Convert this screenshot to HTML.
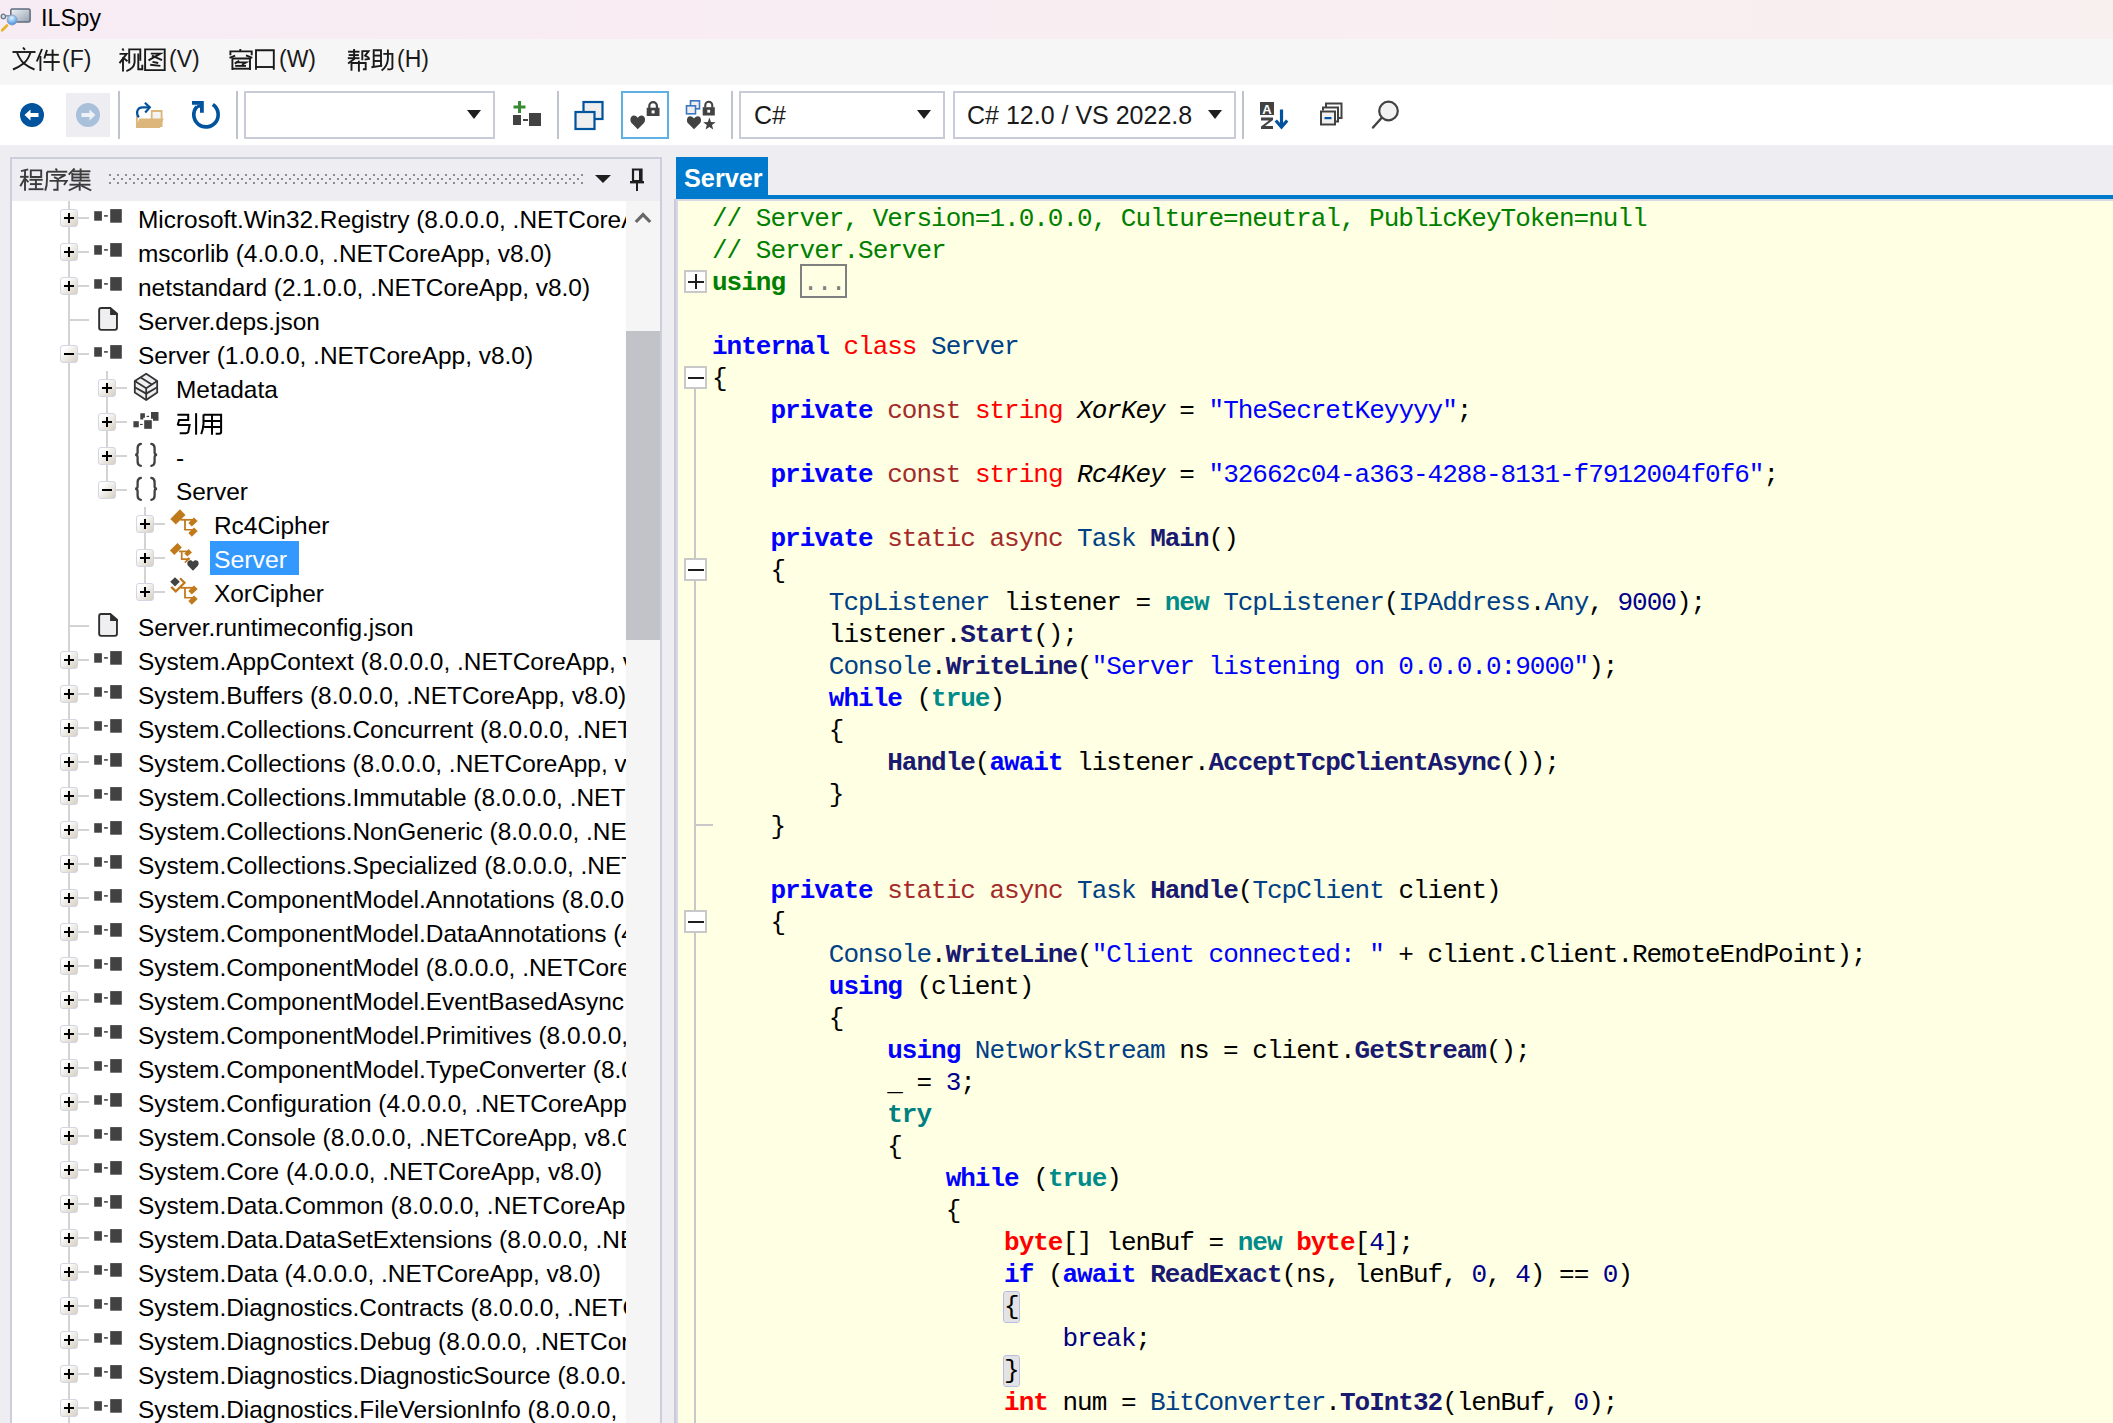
<!DOCTYPE html>
<html><head><meta charset="utf-8">
<style>
*{box-sizing:border-box}
html,body{margin:0;padding:0}
body{width:2113px;height:1423px;overflow:hidden;position:relative;background:#EEEEF2;font-family:"Liberation Sans",sans-serif;color:#1E1E1E}
.abs{position:absolute}
#title{position:absolute;left:0;top:0;width:2113px;height:39px;background:linear-gradient(90deg,#F8ECF4 0%,#F9EEF1 70%,#F8EFEF 100%)}
#title .t{position:absolute;left:41px;top:5px;font-size:23.5px;color:#000}
#menu{position:absolute;left:0;top:39px;width:2113px;height:46px;background:#F6F6F6}
#menu .m{position:absolute;top:7px;font-size:23px;color:#1A1A1A;white-space:pre}
#tool{position:absolute;left:0;top:85px;width:2113px;height:60px;background:#FFFFFF}
.sep{position:absolute;top:91px;width:2px;height:48px;background:#BFC3CE}
.combo{position:absolute;top:91px;height:48px;border:2px solid #C9CBD9;background:#fff}
.combo .v{position:absolute;left:13px;top:8px;font-size:25px;color:#1A1A1A;white-space:pre}
.tri{position:absolute;width:0;height:0;border-left:7px solid transparent;border-right:7px solid transparent;border-top:9px solid #1E1E1E}
#lp{position:absolute;left:10px;top:157px;width:652px;height:1300px;border:2px solid #CCCEDB;background:#EEEEF2}
#lptitle{position:absolute;left:20px;top:165px;font-size:24px;color:#3C3C3C}
#tree{position:absolute;left:12px;top:201px;width:614px;height:1222px;background:#fff;overflow:hidden}
#treein{position:absolute;left:-12px;top:-201px;width:2000px;height:3000px}
#sb{position:absolute;left:626px;top:201px;width:34px;height:1222px;background:#F5F5F5}
#thumb{position:absolute;left:626px;top:331px;width:34px;height:309px;background:#C2C3C9}
.exp{position:absolute;width:18px;height:18px;border:1.5px solid #D3D5E2;border-radius:3px;background:linear-gradient(135deg,#FFFFFF 20%,#D6CFC1 100%)}
.exp .ph{position:absolute;left:2.5px;top:6.5px;width:10px;height:2px;background:#000}
.exp .pv{position:absolute;left:6.5px;top:2.5px;width:2px;height:10px;background:#000}
.tt{position:absolute;height:34px;line-height:38px;font-size:24.8px;white-space:pre;color:#000;padding:0 1px;transform:scaleX(0.985);transform-origin:0 0}
.tt.sel{background:#3399FF;color:#fff;left:210px!important;width:89px;padding-left:4px;transform:none}
#tab{position:absolute;left:676px;top:157px;width:92px;height:42px;background:#007ACC}
#tab .t{position:absolute;left:8px;top:6px;font-size:26.2px;font-weight:bold;color:#fff;transform:scaleX(0.965);transform-origin:0 0}
#tabline{position:absolute;left:676px;top:195px;width:1437px;height:4px;background:#007ACC}
#edb{position:absolute;left:674px;top:199px;width:1439px;height:1224px;background:#D7D8E2}
#edbl{position:absolute;left:674px;top:199px;width:2px;height:1224px;background:#C9CBD8}
#ed{position:absolute;left:678px;top:201px;width:1435px;height:1222px;background:#FFFFE3;overflow:hidden}
#code{position:absolute;left:34px;top:2px;font-family:"Liberation Mono",monospace;font-size:26px;letter-spacing:-1px;color:#000}
.ln{white-space:pre}
.ln{height:32px;line-height:32px}
.coll{display:inline-block;box-sizing:border-box;width:47px;overflow:hidden;border:2px solid #808080;height:34px;line-height:34px;vertical-align:top;margin-top:-3px;color:#808080;padding:0;letter-spacing:-1.5px;text-indent:1px}
.bm{background:#E3E3E3;outline:1.5px solid #B7BBE6;border-radius:2px}
.fb{position:absolute;width:23px;height:23px;border:2px solid #C8C8C8;background:#fff}
.fb .h{position:absolute;left:1.5px;top:8.5px;width:16px;height:2px;background:#1E1E1E}
.fb .v{position:absolute;left:8.5px;top:2px;width:2px;height:15px;background:#1E1E1E}
</style></head><body>
<div id="title">
 <svg class="abs" style="left:0;top:0" width="36" height="36" viewBox="0 0 36 36">
  <defs><linearGradient id="scr" x1="0" y1="0" x2="1" y2="1"><stop offset="0" stop-color="#F2F5F8"/><stop offset="1" stop-color="#939FB0"/></linearGradient>
  <radialGradient id="lens" cx="0.45" cy="0.3" r="0.7"><stop offset="0" stop-color="#E2F6FD"/><stop offset="0.6" stop-color="#7EB8EE"/><stop offset="1" stop-color="#4A86D8"/></radialGradient></defs>
  <rect x="10.8" y="8.9" width="19.3" height="13.2" rx="1.6" fill="url(#scr)" stroke="#5D6B7C" stroke-width="1.5"/>
  <path d="M5.5 15.9 H10.5" stroke="#6A7889" stroke-width="1.3"/>
  <circle cx="3.4" cy="16.4" r="2.2" fill="#D5DCE3" stroke="#6E7A88" stroke-width="1.3"/>
  <circle cx="12.1" cy="20" r="5" fill="url(#lens)" stroke="#8C9BBE" stroke-width="0.8"/>
  <path d="M7 25.6 L2.2 30.2" stroke="#E5B42C" stroke-width="2.8" stroke-linecap="round"/>
 </svg>
 <div class="t">ILSpy</div>
</div>
<div id="menu">
 <div class="m" style="left:62px">(F)</div>
 <div class="m" style="left:169px">(V)</div>
 <div class="m" style="left:279px">(W)</div>
 <div class="m" style="left:397px">(H)</div>
</div>
<svg class="abs" style="left:0px;top:40px" width="470" height="40" viewBox="0 40 470 40"><g fill="none" stroke="#1A1A1A" stroke-width="1.9" stroke-linecap="butt" stroke-linejoin="miter"><path d="M23 47.5 L25 49.8"/><path d="M12.5 52 H35.5"/><path d="M17 52.5 Q20 60 24 63.5 Q29 67.5 34.5 69.5"/><path d="M30.5 52.5 Q28 60 23.5 63.5 Q19 67 13 69.5"/><path d="M42 49 L36.8 61.5"/><path d="M40.4 56 V71"/><path d="M47 50 L44.3 58.5"/><path d="M46 54.8 H58.8"/><path d="M43.5 62 H59.7"/><path d="M52.6 49.4 V71"/><path d="M122.4 48.5 L123.6 50.6"/><path d="M119.5 53.9 H126.6 L119.5 63.2"/><path d="M123 57.3 V71.5"/><path d="M124.1 58.5 L127.5 61.3"/><path d="M129.2 63.6 V49.4 H140.3 V60.7"/><path d="M134.6 53.4 V62.4 Q134 68.5 126.4 71.2"/><path d="M138.3 53.4 V69.3 H142.3 V64.7"/><path d="M145.1 49.4 H164.7 V70.1 H145.1 Z"/><path d="M150.8 53.6 H160.4 L148.5 60.4"/><path d="M151.9 55.6 L162.1 60.2"/><path d="M152.5 61.9 L158.2 63"/><path d="M150.2 64.7 L160.4 65.9"/><path d="M240.3 49 V51.2"/><path d="M230.4 55.3 V51.4 H251.7 V55.3"/><path d="M235.2 55.6 L229.5 57.8"/><path d="M246 55.3 L252.3 57.8"/><path d="M232.4 70.1 V58.5 H250 V70.1"/><path d="M232.4 68.7 H250"/><path d="M239.2 60.7 L234.7 63.6"/><path d="M235.8 62.4 H246 L242 64.7"/><path d="M235.2 65.9 H246"/><path d="M256 69.8 V50.2 H273.8 V69.8"/><path d="M256 67 H273.8"/><path d="M348.1 51.7 H359.5"/><path d="M348.7 55.1 H358.9"/><path d="M347.8 58.2 H359.5"/><path d="M354.1 49.1 V59 L348.1 63.6"/><path d="M362.3 60.2 V51.1 H368.6 L365.1 55.6 Q369.5 57.5 369 59 L364.6 59.6"/><path d="M351.5 70.8 V63 H365.7 V69.3 H362.9"/><path d="M358.9 60.7 V71.7"/><path d="M373.7 66.4 V50.2 H381 V66.4"/><path d="M373.7 55.6 H381"/><path d="M373.7 61 H381"/><path d="M371.4 67.2 L382.2 65.6"/><path d="M383.3 53.9 H392.4 V68.1 Q392.4 69.5 387.3 69.3"/><path d="M387.9 49.4 V59 Q387.5 66 381.6 70.6"/></g></svg>
<div id="tool"></div>
<!-- back -->
<svg class="abs" style="left:18px;top:101px" width="28" height="28" viewBox="0 0 28 28">
 <circle cx="14" cy="14" r="12" fill="#00539C"/>
 <path d="M6.5 14 L12.5 8.5 V12 H20.5 V16 H12.5 V19.5 Z" fill="#fff"/>
</svg>
<div class="abs" style="left:66px;top:93px;width:44px;height:44px;background:#EEEEF2"></div>
<svg class="abs" style="left:74px;top:101px" width="28" height="28" viewBox="0 0 28 28">
 <circle cx="14" cy="14" r="12" fill="#A9C0DA"/>
 <path d="M21.5 14 L15.5 8.5 V12 H7.5 V16 H15.5 V19.5 Z" fill="#EEF2F7"/>
</svg>
<div class="sep" style="left:118px"></div>
<!-- open -->
<svg class="abs" style="left:134px;top:100px" width="32" height="32" viewBox="0 0 32 32">
 <path d="M17.7 11 H27.6 V26 H17.7 Z" fill="#F3F3F3" stroke="#DCB67A" stroke-width="1.8"/>
 <path d="M2 15.3 V27.9 H26 L29.6 18.4 H5.3 L2 27" fill="#DCB67A"/>
 <path d="M2.9 15.3 V27" stroke="#DCB67A" stroke-width="1.8"/>
 <path d="M4.9 17.2 C1.5 13.5 3 7.4 8.5 7.4 H15.5" fill="none" stroke="#00539C" stroke-width="2.2"/>
 <path d="M10.9 2.7 L15.8 7.4 L11.2 12.6" fill="none" stroke="#00539C" stroke-width="2.2"/>
</svg>
<!-- refresh -->
<svg class="abs" style="left:190px;top:99px" width="34" height="34" viewBox="0 0 34 34">
 <path d="M22.8 5.6 A12.2 12.2 0 1 1 7.08 7.38" fill="none" stroke="#00539C" stroke-width="3.65"/>
 <path d="M2 2 H13.8 V13.85 H10 V5.84 H2 Z" fill="#00539C"/>
 <path d="M7.5 5.5 L10.5 5.5 L10.5 8.5 L6 9.5 Z" fill="#00539C"/>
</svg>
<div class="sep" style="left:236px"></div>
<div class="combo" style="left:244px;width:251px"><div class="tri" style="left:221px;top:17px"></div></div>
<!-- add assembly -->
<svg class="abs" style="left:510px;top:99px" width="34" height="30" viewBox="0 0 34 30">
 <rect x="8" y="2" width="3" height="12" fill="#388A34"/><rect x="3.5" y="6.5" width="12" height="3" fill="#388A34"/>
 <rect x="3" y="16" width="8" height="10" fill="#424242"/><rect x="13" y="20" width="5" height="2" fill="#424242"/><rect x="19" y="14" width="12" height="13" fill="#424242"/>
</svg>
<div class="sep" style="left:557px"></div>
<!-- windows -->
<svg class="abs" style="left:572px;top:99px" width="34" height="32" viewBox="0 0 34 32">
 <rect x="11.5" y="3" width="19" height="17" fill="#EFEFEF" stroke="#00539C" stroke-width="2.2"/>
 <rect x="3.5" y="13" width="19" height="17" fill="#EFEFEF" stroke="#00539C" stroke-width="2.2"/>
</svg>
<div class="abs" style="left:621px;top:91px;width:48px;height:48px;border:2px solid #5DB2E3"></div>
<svg class="abs" style="left:626px;top:99px" width="38" height="34" viewBox="0 0 38 34">
 <path d="M11.75 30.3 L5.8 24.3 C3.4 21.9 4.3 16.5 7.8 16.5 C9.8 16.5 11 17.7 11.75 19 C12.5 17.7 13.7 16.5 15.7 16.5 C19.2 16.5 20.1 21.9 17.7 24.3 Z" fill="#424242"/>
 <path d="M23.3 9 V6.9 A3.8 3.8 0 0 1 30.9 6.9 V9" fill="none" stroke="#424242" stroke-width="2.2"/>
 <rect x="20.7" y="8.7" width="12.8" height="8.3" fill="#424242"/><rect x="25.6" y="11.4" width="3" height="3" fill="#fff"/>
</svg>
<!-- heart lock star -->
<svg class="abs" style="left:684px;top:99px" width="36" height="34" viewBox="0 0 36 34">
 <rect x="6.5" y="1.8" width="9" height="8" fill="#EFEFEF" stroke="#3A76C2" stroke-width="1.6"/>
 <rect x="2.5" y="6.8" width="9" height="8" fill="#EFEFEF" stroke="#3A76C2" stroke-width="1.6"/>
 <path d="M10 30.3 L4.3 24.6 C1.9 22.2 2.8 17.2 6.1 17.2 C8 17.2 9.2 18.3 10 19.6 C10.8 18.3 12 17.2 13.9 17.2 C17.2 17.2 18.1 22.2 15.7 24.6 Z" fill="#424242"/>
 <path d="M21.25 8.5 V6.3 A3.5 3.5 0 0 1 28.25 6.3 V8.5" fill="none" stroke="#424242" stroke-width="2.1"/>
 <rect x="18.7" y="8.2" width="12.1" height="8.3" fill="#424242"/><rect x="23.3" y="10.8" width="2.8" height="2.8" fill="#fff"/>
 <path d="M25.4 18.4 L27 23 L31.6 23.2 L28 26 L29.2 30.6 L25.4 28 L21.6 30.6 L22.8 26 L19.2 23.2 L23.8 23 Z" fill="#424242"/>
</svg>
<div class="sep" style="left:731px"></div>
<div class="combo" style="left:739px;width:206px"><div class="v" style="left:13px">C#</div><div class="tri" style="left:176px;top:17px"></div></div>
<div class="combo" style="left:953px;width:283px"><div class="v" style="left:12px">C# 12.0 / VS 2022.8</div><div class="tri" style="left:253px;top:17px"></div></div>
<div class="sep" style="left:1242px"></div>
<!-- sort -->
<svg class="abs" style="left:1258px;top:100px" width="32" height="32" viewBox="0 0 32 32">
 <rect x="2" y="2" width="14" height="13" fill="#424242"/>
 <text x="9" y="13.5" font-family="Liberation Sans" font-weight="bold" font-size="13" fill="#fff" text-anchor="middle">A</text>
 <path d="M3 17.5 H15 V20 L7 26 H15 V29 H3 V26.5 L11 20.5 H3 Z" fill="#424242"/>
 <path d="M23.5 9.5 V26" stroke="#00539C" stroke-width="3.2"/><path d="M17.8 20.5 L23.5 27 L29.2 20.5" fill="none" stroke="#00539C" stroke-width="3.2"/>
</svg>
<!-- collapse -->
<svg class="abs" style="left:1318px;top:101px" width="28" height="28" viewBox="0 0 28 28">
 <path d="M8 6 V2.5 H23.5 V17 H20" fill="none" stroke="#424242" stroke-width="2"/>
 <path d="M5 9.5 V6.5 H20 V20.5 H17" fill="none" stroke="#424242" stroke-width="2"/>
 <rect x="3" y="10.5" width="14" height="13" fill="#F0F0F0" stroke="#424242" stroke-width="2"/>
 <rect x="6.5" y="16" width="7" height="2.2" fill="#00539C"/>
</svg>
<!-- search -->
<svg class="abs" style="left:1370px;top:100px" width="32" height="32" viewBox="0 0 32 32">
 <circle cx="18.5" cy="11" r="9.3" fill="#F2F2F2" stroke="#424242" stroke-width="2.2"/>
 <path d="M11.5 18 L3 27.5" stroke="#424242" stroke-width="2.4" stroke-linecap="round"/>
</svg>

<!-- left pane -->
<div id="lp"></div>
<svg class="abs" style="left:10px;top:160px" width="100" height="36" viewBox="10 160 100 36"><g fill="none" stroke="#3C3C3C" stroke-width="1.9" stroke-linecap="butt" stroke-linejoin="miter"><path d="M28.2 169.4 L21 171.1"/><path d="M20.1 176.8 H28.6"/><path d="M25 169.8 V190.7"/><path d="M25 177.9 L20.3 186.2"/><path d="M25.6 179.2 L28.4 182.1"/><path d="M30.8 170.4 H41.2 V177 H30.8 Z"/><path d="M29.5 179.8 H42.7"/><path d="M29.9 184.1 H41.8"/><path d="M28.6 189.2 H43.5"/><path d="M35.9 179.8 V189.2"/><path d="M55.5 168.5 L57.2 170.6"/><path d="M47 171.7 H67.2"/><path d="M47 171.7 V179.2 Q47 186 45.2 190.7"/><path d="M51.2 174.9 H65.5 L59.1 178.3"/><path d="M54 177.2 L59.1 179.4"/><path d="M49.5 180.9 H66.7 L64 185.1"/><path d="M57.6 179.6 V189.8 H53.3"/><path d="M74.6 168.5 L68.7 174.7"/><path d="M72.3 172.8 V181.3"/><path d="M73 171.3 H90.4"/><path d="M73 174.4 H89.4"/><path d="M73 177.5 H89.4"/><path d="M73 180.6 H90.4"/><path d="M80.6 168.5 V180.4"/><path d="M69.5 184.7 H90.4"/><path d="M79.7 182.1 V190.7"/><path d="M78.9 185.6 L68.7 190.5"/><path d="M81.4 185.6 L91.2 190.5"/></g></svg>
<svg class="abs" style="left:108px;top:172px" width="475" height="14">
 <defs><pattern id="grip" width="8" height="8" patternUnits="userSpaceOnUse"><rect x="1" y="2" width="2" height="2" fill="#8C8C8C"/><rect x="5" y="6" width="2" height="2" fill="#8C8C8C"/></pattern></defs>
 <rect x="0" y="0" width="475" height="13" fill="url(#grip)"/>
</svg>
<div class="tri" style="left:595px;top:175px;border-left-width:8px;border-right-width:8px;border-top-width:8px"></div>
<svg class="abs" style="left:628px;top:167px" width="18" height="26" viewBox="0 0 18 26">
 <path d="M5 2.5 H13.5 V14 H5 Z" fill="none" stroke="#1E1E1E" stroke-width="2.2"/>
 <rect x="11" y="2" width="3" height="12" fill="#1E1E1E"/>
 <rect x="2" y="14" width="14" height="2.4" fill="#1E1E1E"/>
 <rect x="8" y="15" width="2" height="9" fill="#1E1E1E"/>
</svg>
<div id="tree"><div id="treein">
<div style="position:absolute;left:68px;top:201px;width:2px;height:1222px;background:#D3D3D3"></div>
<div style="position:absolute;left:106px;top:371px;width:2px;height:119px;background:#D3D3D3"></div>
<div style="position:absolute;left:144px;top:507px;width:2px;height:85px;background:#D3D3D3"></div>
<div style="position:absolute;left:69px;top:217px;width:20px;height:2px;background:#D3D3D3"></div>
<div class="exp" style="left:60px;top:209px"><div class="ph"></div><div class="pv"></div></div>
<svg style="position:absolute;left:94px;top:201px" width="30" height="30" viewBox="0 0 30 30"><g fill="#424242"><rect x="0.2" y="10.2" width="7.7" height="9.5"/><rect x="10.1" y="14.1" width="3.7" height="1.6"/><rect x="16.2" y="8.1" width="11.6" height="13.6"/></g></svg>
<div class="tt" style="left:137px;top:201px">Microsoft.Win32.Registry (8.0.0.0, .NETCoreApp, v8.0)</div>
<div style="position:absolute;left:69px;top:251px;width:20px;height:2px;background:#D3D3D3"></div>
<div class="exp" style="left:60px;top:243px"><div class="ph"></div><div class="pv"></div></div>
<svg style="position:absolute;left:94px;top:235px" width="30" height="30" viewBox="0 0 30 30"><g fill="#424242"><rect x="0.2" y="10.2" width="7.7" height="9.5"/><rect x="10.1" y="14.1" width="3.7" height="1.6"/><rect x="16.2" y="8.1" width="11.6" height="13.6"/></g></svg>
<div class="tt" style="left:137px;top:235px">mscorlib (4.0.0.0, .NETCoreApp, v8.0)</div>
<div style="position:absolute;left:69px;top:285px;width:20px;height:2px;background:#D3D3D3"></div>
<div class="exp" style="left:60px;top:277px"><div class="ph"></div><div class="pv"></div></div>
<svg style="position:absolute;left:94px;top:269px" width="30" height="30" viewBox="0 0 30 30"><g fill="#424242"><rect x="0.2" y="10.2" width="7.7" height="9.5"/><rect x="10.1" y="14.1" width="3.7" height="1.6"/><rect x="16.2" y="8.1" width="11.6" height="13.6"/></g></svg>
<div class="tt" style="left:137px;top:269px">netstandard (2.1.0.0, .NETCoreApp, v8.0)</div>
<div style="position:absolute;left:69px;top:319px;width:20px;height:2px;background:#D3D3D3"></div>
<svg style="position:absolute;left:85px;top:303px" width="36" height="32" viewBox="0 0 36 32"><path d="M14.15 7 Q14.15 4.95 16.2 4.95 H25.3 L31.95 10.8 V24.8 Q31.95 26.85 29.9 26.85 H16.2 Q14.15 26.85 14.15 24.8 Z" fill="#EFEFF2" stroke="#2F2F2F" stroke-width="1.9"/><path d="M24.4 4 L32.9 10.9 V11.9 H25.1 V4 Z" fill="#2F2F2F"/></svg>
<div class="tt" style="left:137px;top:303px">Server.deps.json</div>
<div style="position:absolute;left:69px;top:353px;width:20px;height:2px;background:#D3D3D3"></div>
<div class="exp" style="left:60px;top:345px"><div class="ph"></div></div>
<svg style="position:absolute;left:94px;top:337px" width="30" height="30" viewBox="0 0 30 30"><g fill="#424242"><rect x="0.2" y="10.2" width="7.7" height="9.5"/><rect x="10.1" y="14.1" width="3.7" height="1.6"/><rect x="16.2" y="8.1" width="11.6" height="13.6"/></g></svg>
<div class="tt" style="left:137px;top:337px">Server (1.0.0.0, .NETCoreApp, v8.0)</div>
<div style="position:absolute;left:107px;top:387px;width:20px;height:2px;background:#D3D3D3"></div>
<div class="exp" style="left:98px;top:379px"><div class="ph"></div><div class="pv"></div></div>
<svg style="position:absolute;left:125px;top:370px" width="40" height="34" viewBox="0 0 40 34"><g fill="#EFEFF2" stroke="#333" stroke-width="1.8" stroke-linejoin="round"><path d="M21.2 3.7 L32.2 11.1 V22.6 L21.2 30 L9.8 22.6 V11.1 Z"/><path d="M9.8 11.1 L21.2 18.2 L32.2 11.1" fill="none"/><path d="M21.2 18.2 V30" fill="none"/><path d="M9.8 17.2 L21.2 23.6 L32.2 17.2" fill="none"/><path d="M15.7 7.6 L26.8 14.5" fill="none"/></g></svg>
<div class="tt" style="left:175px;top:371px">Metadata</div>
<div style="position:absolute;left:107px;top:421px;width:20px;height:2px;background:#D3D3D3"></div>
<div class="exp" style="left:98px;top:413px"><div class="ph"></div><div class="pv"></div></div>
<svg style="position:absolute;left:125px;top:405px" width="40" height="34" viewBox="0 0 40 34"><g fill="#424242"><path d="M15.3 8.3 H19.9 V12.8 H18.3 V14.4 H15.3 Z"/><rect x="21.6" y="10.8" width="2.5" height="1.2"/><path d="M26 7 H33.5 V15.7 H28 V13.8 H26 Z"/><rect x="8.4" y="16.2" width="5.4" height="6.1"/><rect x="15" y="18.9" width="2.7" height="1.1"/><rect x="19.2" y="15.2" width="7.6" height="8.6"/></g></svg>
<svg class="abs" style="left:170px;top:404px" width="60" height="36" viewBox="170 404 60 36"><g fill="none" stroke="#000" stroke-width="2.0" stroke-linecap="butt" stroke-linejoin="miter"><path d="M177.4 414.8 H188.2 V421"/><path d="M188.2 420 H179.1 L177.7 425.2"/><path d="M177.7 424.9 H189.6 L188.2 432.1 Q187.6 433.2 186 433.2 H179.7"/><path d="M196.1 413.2 V434.7"/><path d="M203.5 414.5 V423.9 Q203 430 201.2 434.1"/><path d="M203.5 414.8 H221.1 V432 Q221.1 433.8 219 433.8 H215.7"/><path d="M204.1 421 H221.1"/><path d="M204.1 427 H221.1"/><path d="M212 414.8 V434.7"/></g></svg>
<div style="position:absolute;left:107px;top:455px;width:20px;height:2px;background:#D3D3D3"></div>
<div class="exp" style="left:98px;top:447px"><div class="ph"></div><div class="pv"></div></div>
<svg style="position:absolute;left:125px;top:439px" width="40" height="34" viewBox="0 0 40 34"><g fill="none" stroke="#424242" stroke-width="2.3" stroke-linecap="round"><path d="M15.9 4.9 C13.2 5.3 12.6 6.6 12.6 9.2 V13.6 C12.6 15.1 11.6 15.9 10.1 15.9 C11.6 15.9 12.6 16.7 12.6 18.2 V22.6 C12.6 25.2 13.2 26.5 15.9 26.9"/><path d="M26.3 4.9 C29 5.3 29.6 6.6 29.6 9.2 V13.6 C29.6 15.1 30.6 15.9 32.1 15.9 C30.6 15.9 29.6 16.7 29.6 18.2 V22.6 C29.6 25.2 29 26.5 26.3 26.9"/></g></svg>
<div class="tt" style="left:175px;top:439px">-</div>
<div style="position:absolute;left:107px;top:489px;width:20px;height:2px;background:#D3D3D3"></div>
<div class="exp" style="left:98px;top:481px"><div class="ph"></div></div>
<svg style="position:absolute;left:125px;top:473px" width="40" height="34" viewBox="0 0 40 34"><g fill="none" stroke="#424242" stroke-width="2.3" stroke-linecap="round"><path d="M15.9 4.9 C13.2 5.3 12.6 6.6 12.6 9.2 V13.6 C12.6 15.1 11.6 15.9 10.1 15.9 C11.6 15.9 12.6 16.7 12.6 18.2 V22.6 C12.6 25.2 13.2 26.5 15.9 26.9"/><path d="M26.3 4.9 C29 5.3 29.6 6.6 29.6 9.2 V13.6 C29.6 15.1 30.6 15.9 32.1 15.9 C30.6 15.9 29.6 16.7 29.6 18.2 V22.6 C29.6 25.2 29 26.5 26.3 26.9"/></g></svg>
<div class="tt" style="left:175px;top:473px">Server</div>
<div style="position:absolute;left:145px;top:523px;width:20px;height:2px;background:#D3D3D3"></div>
<div class="exp" style="left:136px;top:515px"><div class="ph"></div><div class="pv"></div></div>
<svg style="position:absolute;left:165px;top:505px" width="36" height="34" viewBox="0 0 36 34"><path d="M5.34 13.9 L14.9 4.2 L20.5 10.0 L10.8 19.5 Z" fill="#C07A1C"/><path d="M15.5 13.9 H28.5 V15.7 H15.5 Z" fill="#C07A1C"/><path d="M28.95 12.4 L32.7 16.0 L26.8 21.5 L23.3 18.0 Z" fill="#C07A1C"/><path d="M19.1 15 H20.9 V23.9 H28.5 V25.6 H19.1 Z" fill="#C07A1C"/><path d="M28.95 22.5 L32.7 25.9 L26.8 31.8 L23.3 28.1 Z" fill="#C07A1C"/></svg>
<div class="tt" style="left:213px;top:507px">Rc4Cipher</div>
<div style="position:absolute;left:145px;top:557px;width:20px;height:2px;background:#D3D3D3"></div>
<div class="exp" style="left:136px;top:549px"><div class="ph"></div><div class="pv"></div></div>
<svg style="position:absolute;left:165px;top:539px" width="36" height="34" viewBox="0 0 36 34"><path d="M4.9 11.5 L12.5 3.9 L16.9 8.4 L9.3 16.0 Z" fill="#C07A1C"/><path d="M14 11.55 H23 V13.25 H14 Z" fill="#C07A1C"/><path d="M23.6 10.1 L27 13.5 L22.2 17.6 L19.4 14.6 Z" fill="#C07A1C"/><path d="M15.85 12.4 H17.55 V19.35 H24.5 V21.05 H15.85 Z" fill="#C07A1C"/><path d="M23.6 18.3 L25.3 19.7 L20.2 24.2 L19.4 23 Z" fill="#C07A1C"/><path d="M28 31.8 L23.6 27.3 C21.4 25.1 22.2 21.2 25.2 21.2 C26.5 21.2 27.4 21.9 28 22.8 C28.6 21.9 29.5 21.2 30.8 21.2 C33.8 21.2 34.6 25.1 32.4 27.3 Z" fill="#424242"/></svg>
<div class="tt sel" style="left:213px;top:541px">Server</div>
<div style="position:absolute;left:145px;top:591px;width:20px;height:2px;background:#D3D3D3"></div>
<div class="exp" style="left:136px;top:583px"><div class="ph"></div><div class="pv"></div></div>
<svg style="position:absolute;left:165px;top:573px" width="36" height="34" viewBox="0 0 36 34"><path d="M6.2 13.9 L10.8 18.4 L19.5 9.8 L15 5.3" fill="none" stroke="#C07A1C" stroke-width="2.3" stroke-linejoin="miter"/><path d="M10 4.2 L14.8 8.7 L10 13.5 L5.2 8.7 Z" fill="#424242"/><path d="M15.5 13.9 H28.5 V15.7 H15.5 Z" fill="#C07A1C"/><path d="M28.95 12.4 L32.7 16.0 L26.8 21.5 L23.3 18.0 Z" fill="#C07A1C"/><path d="M19.1 15 H20.9 V23.9 H28.5 V25.6 H19.1 Z" fill="#C07A1C"/><path d="M28.95 22.5 L32.7 25.9 L26.8 31.8 L23.3 28.1 Z" fill="#C07A1C"/></svg>
<div class="tt" style="left:213px;top:575px">XorCipher</div>
<div style="position:absolute;left:69px;top:625px;width:20px;height:2px;background:#D3D3D3"></div>
<svg style="position:absolute;left:85px;top:609px" width="36" height="32" viewBox="0 0 36 32"><path d="M14.15 7 Q14.15 4.95 16.2 4.95 H25.3 L31.95 10.8 V24.8 Q31.95 26.85 29.9 26.85 H16.2 Q14.15 26.85 14.15 24.8 Z" fill="#EFEFF2" stroke="#2F2F2F" stroke-width="1.9"/><path d="M24.4 4 L32.9 10.9 V11.9 H25.1 V4 Z" fill="#2F2F2F"/></svg>
<div class="tt" style="left:137px;top:609px">Server.runtimeconfig.json</div>
<div style="position:absolute;left:69px;top:659px;width:20px;height:2px;background:#D3D3D3"></div>
<div class="exp" style="left:60px;top:651px"><div class="ph"></div><div class="pv"></div></div>
<svg style="position:absolute;left:94px;top:643px" width="30" height="30" viewBox="0 0 30 30"><g fill="#424242"><rect x="0.2" y="10.2" width="7.7" height="9.5"/><rect x="10.1" y="14.1" width="3.7" height="1.6"/><rect x="16.2" y="8.1" width="11.6" height="13.6"/></g></svg>
<div class="tt" style="left:137px;top:643px">System.AppContext (8.0.0.0, .NETCoreApp, v8.0)</div>
<div style="position:absolute;left:69px;top:693px;width:20px;height:2px;background:#D3D3D3"></div>
<div class="exp" style="left:60px;top:685px"><div class="ph"></div><div class="pv"></div></div>
<svg style="position:absolute;left:94px;top:677px" width="30" height="30" viewBox="0 0 30 30"><g fill="#424242"><rect x="0.2" y="10.2" width="7.7" height="9.5"/><rect x="10.1" y="14.1" width="3.7" height="1.6"/><rect x="16.2" y="8.1" width="11.6" height="13.6"/></g></svg>
<div class="tt" style="left:137px;top:677px">System.Buffers (8.0.0.0, .NETCoreApp, v8.0)</div>
<div style="position:absolute;left:69px;top:727px;width:20px;height:2px;background:#D3D3D3"></div>
<div class="exp" style="left:60px;top:719px"><div class="ph"></div><div class="pv"></div></div>
<svg style="position:absolute;left:94px;top:711px" width="30" height="30" viewBox="0 0 30 30"><g fill="#424242"><rect x="0.2" y="10.2" width="7.7" height="9.5"/><rect x="10.1" y="14.1" width="3.7" height="1.6"/><rect x="16.2" y="8.1" width="11.6" height="13.6"/></g></svg>
<div class="tt" style="left:137px;top:711px">System.Collections.Concurrent (8.0.0.0, .NETCoreApp, v8.0)</div>
<div style="position:absolute;left:69px;top:761px;width:20px;height:2px;background:#D3D3D3"></div>
<div class="exp" style="left:60px;top:753px"><div class="ph"></div><div class="pv"></div></div>
<svg style="position:absolute;left:94px;top:745px" width="30" height="30" viewBox="0 0 30 30"><g fill="#424242"><rect x="0.2" y="10.2" width="7.7" height="9.5"/><rect x="10.1" y="14.1" width="3.7" height="1.6"/><rect x="16.2" y="8.1" width="11.6" height="13.6"/></g></svg>
<div class="tt" style="left:137px;top:745px">System.Collections (8.0.0.0, .NETCoreApp, v8.0)</div>
<div style="position:absolute;left:69px;top:795px;width:20px;height:2px;background:#D3D3D3"></div>
<div class="exp" style="left:60px;top:787px"><div class="ph"></div><div class="pv"></div></div>
<svg style="position:absolute;left:94px;top:779px" width="30" height="30" viewBox="0 0 30 30"><g fill="#424242"><rect x="0.2" y="10.2" width="7.7" height="9.5"/><rect x="10.1" y="14.1" width="3.7" height="1.6"/><rect x="16.2" y="8.1" width="11.6" height="13.6"/></g></svg>
<div class="tt" style="left:137px;top:779px">System.Collections.Immutable (8.0.0.0, .NETCoreApp, v8.0)</div>
<div style="position:absolute;left:69px;top:829px;width:20px;height:2px;background:#D3D3D3"></div>
<div class="exp" style="left:60px;top:821px"><div class="ph"></div><div class="pv"></div></div>
<svg style="position:absolute;left:94px;top:813px" width="30" height="30" viewBox="0 0 30 30"><g fill="#424242"><rect x="0.2" y="10.2" width="7.7" height="9.5"/><rect x="10.1" y="14.1" width="3.7" height="1.6"/><rect x="16.2" y="8.1" width="11.6" height="13.6"/></g></svg>
<div class="tt" style="left:137px;top:813px">System.Collections.NonGeneric (8.0.0.0, .NETCoreApp, v8.0)</div>
<div style="position:absolute;left:69px;top:863px;width:20px;height:2px;background:#D3D3D3"></div>
<div class="exp" style="left:60px;top:855px"><div class="ph"></div><div class="pv"></div></div>
<svg style="position:absolute;left:94px;top:847px" width="30" height="30" viewBox="0 0 30 30"><g fill="#424242"><rect x="0.2" y="10.2" width="7.7" height="9.5"/><rect x="10.1" y="14.1" width="3.7" height="1.6"/><rect x="16.2" y="8.1" width="11.6" height="13.6"/></g></svg>
<div class="tt" style="left:137px;top:847px">System.Collections.Specialized (8.0.0.0, .NETCoreApp, v8.0)</div>
<div style="position:absolute;left:69px;top:897px;width:20px;height:2px;background:#D3D3D3"></div>
<div class="exp" style="left:60px;top:889px"><div class="ph"></div><div class="pv"></div></div>
<svg style="position:absolute;left:94px;top:881px" width="30" height="30" viewBox="0 0 30 30"><g fill="#424242"><rect x="0.2" y="10.2" width="7.7" height="9.5"/><rect x="10.1" y="14.1" width="3.7" height="1.6"/><rect x="16.2" y="8.1" width="11.6" height="13.6"/></g></svg>
<div class="tt" style="left:137px;top:881px">System.ComponentModel.Annotations (8.0.0.0, .NETCoreApp, v8.0)</div>
<div style="position:absolute;left:69px;top:931px;width:20px;height:2px;background:#D3D3D3"></div>
<div class="exp" style="left:60px;top:923px"><div class="ph"></div><div class="pv"></div></div>
<svg style="position:absolute;left:94px;top:915px" width="30" height="30" viewBox="0 0 30 30"><g fill="#424242"><rect x="0.2" y="10.2" width="7.7" height="9.5"/><rect x="10.1" y="14.1" width="3.7" height="1.6"/><rect x="16.2" y="8.1" width="11.6" height="13.6"/></g></svg>
<div class="tt" style="left:137px;top:915px">System.ComponentModel.DataAnnotations (4.0.0.0, .NETCoreApp, v8.0)</div>
<div style="position:absolute;left:69px;top:965px;width:20px;height:2px;background:#D3D3D3"></div>
<div class="exp" style="left:60px;top:957px"><div class="ph"></div><div class="pv"></div></div>
<svg style="position:absolute;left:94px;top:949px" width="30" height="30" viewBox="0 0 30 30"><g fill="#424242"><rect x="0.2" y="10.2" width="7.7" height="9.5"/><rect x="10.1" y="14.1" width="3.7" height="1.6"/><rect x="16.2" y="8.1" width="11.6" height="13.6"/></g></svg>
<div class="tt" style="left:137px;top:949px">System.ComponentModel (8.0.0.0, .NETCoreApp, v8.0)</div>
<div style="position:absolute;left:69px;top:999px;width:20px;height:2px;background:#D3D3D3"></div>
<div class="exp" style="left:60px;top:991px"><div class="ph"></div><div class="pv"></div></div>
<svg style="position:absolute;left:94px;top:983px" width="30" height="30" viewBox="0 0 30 30"><g fill="#424242"><rect x="0.2" y="10.2" width="7.7" height="9.5"/><rect x="10.1" y="14.1" width="3.7" height="1.6"/><rect x="16.2" y="8.1" width="11.6" height="13.6"/></g></svg>
<div class="tt" style="left:137px;top:983px">System.ComponentModel.EventBasedAsync (8.0.0.0, .NETCoreApp, v8.0)</div>
<div style="position:absolute;left:69px;top:1033px;width:20px;height:2px;background:#D3D3D3"></div>
<div class="exp" style="left:60px;top:1025px"><div class="ph"></div><div class="pv"></div></div>
<svg style="position:absolute;left:94px;top:1017px" width="30" height="30" viewBox="0 0 30 30"><g fill="#424242"><rect x="0.2" y="10.2" width="7.7" height="9.5"/><rect x="10.1" y="14.1" width="3.7" height="1.6"/><rect x="16.2" y="8.1" width="11.6" height="13.6"/></g></svg>
<div class="tt" style="left:137px;top:1017px">System.ComponentModel.Primitives (8.0.0.0, .NETCoreApp, v8.0)</div>
<div style="position:absolute;left:69px;top:1067px;width:20px;height:2px;background:#D3D3D3"></div>
<div class="exp" style="left:60px;top:1059px"><div class="ph"></div><div class="pv"></div></div>
<svg style="position:absolute;left:94px;top:1051px" width="30" height="30" viewBox="0 0 30 30"><g fill="#424242"><rect x="0.2" y="10.2" width="7.7" height="9.5"/><rect x="10.1" y="14.1" width="3.7" height="1.6"/><rect x="16.2" y="8.1" width="11.6" height="13.6"/></g></svg>
<div class="tt" style="left:137px;top:1051px">System.ComponentModel.TypeConverter (8.0.0.0, .NETCoreApp, v8.0)</div>
<div style="position:absolute;left:69px;top:1101px;width:20px;height:2px;background:#D3D3D3"></div>
<div class="exp" style="left:60px;top:1093px"><div class="ph"></div><div class="pv"></div></div>
<svg style="position:absolute;left:94px;top:1085px" width="30" height="30" viewBox="0 0 30 30"><g fill="#424242"><rect x="0.2" y="10.2" width="7.7" height="9.5"/><rect x="10.1" y="14.1" width="3.7" height="1.6"/><rect x="16.2" y="8.1" width="11.6" height="13.6"/></g></svg>
<div class="tt" style="left:137px;top:1085px">System.Configuration (4.0.0.0, .NETCoreApp, v8.0)</div>
<div style="position:absolute;left:69px;top:1135px;width:20px;height:2px;background:#D3D3D3"></div>
<div class="exp" style="left:60px;top:1127px"><div class="ph"></div><div class="pv"></div></div>
<svg style="position:absolute;left:94px;top:1119px" width="30" height="30" viewBox="0 0 30 30"><g fill="#424242"><rect x="0.2" y="10.2" width="7.7" height="9.5"/><rect x="10.1" y="14.1" width="3.7" height="1.6"/><rect x="16.2" y="8.1" width="11.6" height="13.6"/></g></svg>
<div class="tt" style="left:137px;top:1119px">System.Console (8.0.0.0, .NETCoreApp, v8.0)</div>
<div style="position:absolute;left:69px;top:1169px;width:20px;height:2px;background:#D3D3D3"></div>
<div class="exp" style="left:60px;top:1161px"><div class="ph"></div><div class="pv"></div></div>
<svg style="position:absolute;left:94px;top:1153px" width="30" height="30" viewBox="0 0 30 30"><g fill="#424242"><rect x="0.2" y="10.2" width="7.7" height="9.5"/><rect x="10.1" y="14.1" width="3.7" height="1.6"/><rect x="16.2" y="8.1" width="11.6" height="13.6"/></g></svg>
<div class="tt" style="left:137px;top:1153px">System.Core (4.0.0.0, .NETCoreApp, v8.0)</div>
<div style="position:absolute;left:69px;top:1203px;width:20px;height:2px;background:#D3D3D3"></div>
<div class="exp" style="left:60px;top:1195px"><div class="ph"></div><div class="pv"></div></div>
<svg style="position:absolute;left:94px;top:1187px" width="30" height="30" viewBox="0 0 30 30"><g fill="#424242"><rect x="0.2" y="10.2" width="7.7" height="9.5"/><rect x="10.1" y="14.1" width="3.7" height="1.6"/><rect x="16.2" y="8.1" width="11.6" height="13.6"/></g></svg>
<div class="tt" style="left:137px;top:1187px">System.Data.Common (8.0.0.0, .NETCoreApp, v8.0)</div>
<div style="position:absolute;left:69px;top:1237px;width:20px;height:2px;background:#D3D3D3"></div>
<div class="exp" style="left:60px;top:1229px"><div class="ph"></div><div class="pv"></div></div>
<svg style="position:absolute;left:94px;top:1221px" width="30" height="30" viewBox="0 0 30 30"><g fill="#424242"><rect x="0.2" y="10.2" width="7.7" height="9.5"/><rect x="10.1" y="14.1" width="3.7" height="1.6"/><rect x="16.2" y="8.1" width="11.6" height="13.6"/></g></svg>
<div class="tt" style="left:137px;top:1221px">System.Data.DataSetExtensions (8.0.0.0, .NETCoreApp, v8.0)</div>
<div style="position:absolute;left:69px;top:1271px;width:20px;height:2px;background:#D3D3D3"></div>
<div class="exp" style="left:60px;top:1263px"><div class="ph"></div><div class="pv"></div></div>
<svg style="position:absolute;left:94px;top:1255px" width="30" height="30" viewBox="0 0 30 30"><g fill="#424242"><rect x="0.2" y="10.2" width="7.7" height="9.5"/><rect x="10.1" y="14.1" width="3.7" height="1.6"/><rect x="16.2" y="8.1" width="11.6" height="13.6"/></g></svg>
<div class="tt" style="left:137px;top:1255px">System.Data (4.0.0.0, .NETCoreApp, v8.0)</div>
<div style="position:absolute;left:69px;top:1305px;width:20px;height:2px;background:#D3D3D3"></div>
<div class="exp" style="left:60px;top:1297px"><div class="ph"></div><div class="pv"></div></div>
<svg style="position:absolute;left:94px;top:1289px" width="30" height="30" viewBox="0 0 30 30"><g fill="#424242"><rect x="0.2" y="10.2" width="7.7" height="9.5"/><rect x="10.1" y="14.1" width="3.7" height="1.6"/><rect x="16.2" y="8.1" width="11.6" height="13.6"/></g></svg>
<div class="tt" style="left:137px;top:1289px">System.Diagnostics.Contracts (8.0.0.0, .NETCoreApp, v8.0)</div>
<div style="position:absolute;left:69px;top:1339px;width:20px;height:2px;background:#D3D3D3"></div>
<div class="exp" style="left:60px;top:1331px"><div class="ph"></div><div class="pv"></div></div>
<svg style="position:absolute;left:94px;top:1323px" width="30" height="30" viewBox="0 0 30 30"><g fill="#424242"><rect x="0.2" y="10.2" width="7.7" height="9.5"/><rect x="10.1" y="14.1" width="3.7" height="1.6"/><rect x="16.2" y="8.1" width="11.6" height="13.6"/></g></svg>
<div class="tt" style="left:137px;top:1323px">System.Diagnostics.Debug (8.0.0.0, .NETCoreApp, v8.0)</div>
<div style="position:absolute;left:69px;top:1373px;width:20px;height:2px;background:#D3D3D3"></div>
<div class="exp" style="left:60px;top:1365px"><div class="ph"></div><div class="pv"></div></div>
<svg style="position:absolute;left:94px;top:1357px" width="30" height="30" viewBox="0 0 30 30"><g fill="#424242"><rect x="0.2" y="10.2" width="7.7" height="9.5"/><rect x="10.1" y="14.1" width="3.7" height="1.6"/><rect x="16.2" y="8.1" width="11.6" height="13.6"/></g></svg>
<div class="tt" style="left:137px;top:1357px">System.Diagnostics.DiagnosticSource (8.0.0.0, .NETCoreApp, v8.0)</div>
<div style="position:absolute;left:69px;top:1407px;width:20px;height:2px;background:#D3D3D3"></div>
<div class="exp" style="left:60px;top:1399px"><div class="ph"></div><div class="pv"></div></div>
<svg style="position:absolute;left:94px;top:1391px" width="30" height="30" viewBox="0 0 30 30"><g fill="#424242"><rect x="0.2" y="10.2" width="7.7" height="9.5"/><rect x="10.1" y="14.1" width="3.7" height="1.6"/><rect x="16.2" y="8.1" width="11.6" height="13.6"/></g></svg>
<div class="tt" style="left:137px;top:1391px">System.Diagnostics.FileVersionInfo (8.0.0.0, .NETCoreApp, v8.0)</div>
<div style="position:absolute;left:69px;top:1441px;width:20px;height:2px;background:#D3D3D3"></div>
<div class="exp" style="left:60px;top:1433px"><div class="ph"></div><div class="pv"></div></div>
<svg style="position:absolute;left:94px;top:1425px" width="30" height="30" viewBox="0 0 30 30"><g fill="#424242"><rect x="0.2" y="10.2" width="7.7" height="9.5"/><rect x="10.1" y="14.1" width="3.7" height="1.6"/><rect x="16.2" y="8.1" width="11.6" height="13.6"/></g></svg>
<div class="tt" style="left:137px;top:1425px">System.Diagnostics.Process (8.0.0.0, .NETCoreApp, v8.0)</div>
</div></div>
<div id="sb"></div>
<div id="thumb"></div>
<svg class="abs" style="left:634px;top:211px" width="18" height="14" viewBox="0 0 18 14">
 <path d="M1.8 11 L9 3.6 L16.2 11" fill="none" stroke="#686868" stroke-width="3.2"/>
</svg>

<!-- editor -->
<div id="edb"></div>
<div id="edbl"></div>
<div id="tab"><div class="t">Server</div></div>
<div id="tabline"></div>
<div id="ed">
 <div id="code">
<div class="ln"><span style="color:#008000">// Server, Version=1.0.0.0, Culture=neutral, PublicKeyToken=null</span></div><div class="ln"><span style="color:#008000">// Server.Server</span></div><div class="ln"><span style="color:#008000;font-weight:bold">using</span> <span class="coll">...</span></div><div class="ln">&#8203;</div><div class="ln"><span style="color:#0000FF;font-weight:bold">internal</span> <span style="color:#FF0000">class</span> <span style="color:#004085">Server</span></div><div class="ln">{</div><div class="ln">    <span style="color:#0000FF;font-weight:bold">private</span> <span style="color:#A52A2A">const</span> <span style="color:#FF0000">string</span> <span style="font-style:italic">XorKey</span> = <span style="color:#0000FF">&quot;TheSecretKeyyyy&quot;</span>;</div><div class="ln">&#8203;</div><div class="ln">    <span style="color:#0000FF;font-weight:bold">private</span> <span style="color:#A52A2A">const</span> <span style="color:#FF0000">string</span> <span style="font-style:italic">Rc4Key</span> = <span style="color:#0000FF">&quot;32662c04-a363-4288-8131-f7912004f0f6&quot;</span>;</div><div class="ln">&#8203;</div><div class="ln">    <span style="color:#0000FF;font-weight:bold">private</span> <span style="color:#A52A2A">static</span> <span style="color:#A52A2A">async</span> <span style="color:#004085">Task</span> <span style="color:#191970;font-weight:bold">Main</span>()</div><div class="ln">    {</div><div class="ln">        <span style="color:#004085">TcpListener</span> listener = <span style="color:#008B8B;font-weight:bold">new</span> <span style="color:#004085">TcpListener</span>(<span style="color:#004085">IPAddress</span>.<span style="color:#004085">Any</span>, <span style="color:#00008B">9000</span>);</div><div class="ln">        listener.<span style="color:#191970;font-weight:bold">Start</span>();</div><div class="ln">        <span style="color:#004085">Console</span>.<span style="color:#191970;font-weight:bold">WriteLine</span>(<span style="color:#0000FF">&quot;Server listening on 0.0.0.0:9000&quot;</span>);</div><div class="ln">        <span style="color:#0000FF;font-weight:bold">while</span> (<span style="color:#008B8B;font-weight:bold">true</span>)</div><div class="ln">        {</div><div class="ln">            <span style="color:#191970;font-weight:bold">Handle</span>(<span style="color:#0000FF;font-weight:bold">await</span> listener.<span style="color:#191970;font-weight:bold">AcceptTcpClientAsync</span>());</div><div class="ln">        }</div><div class="ln">    }</div><div class="ln">&#8203;</div><div class="ln">    <span style="color:#0000FF;font-weight:bold">private</span> <span style="color:#A52A2A">static</span> <span style="color:#A52A2A">async</span> <span style="color:#004085">Task</span> <span style="color:#191970;font-weight:bold">Handle</span>(<span style="color:#004085">TcpClient</span> client)</div><div class="ln">    {</div><div class="ln">        <span style="color:#004085">Console</span>.<span style="color:#191970;font-weight:bold">WriteLine</span>(<span style="color:#0000FF">&quot;Client connected: &quot;</span> + client.Client.RemoteEndPoint);</div><div class="ln">        <span style="color:#0000FF;font-weight:bold">using</span> (client)</div><div class="ln">        {</div><div class="ln">            <span style="color:#0000FF;font-weight:bold">using</span> <span style="color:#004085">NetworkStream</span> ns = client.<span style="color:#191970;font-weight:bold">GetStream</span>();</div><div class="ln">            _ = <span style="color:#00008B">3</span>;</div><div class="ln">            <span style="color:#008080;font-weight:bold">try</span></div><div class="ln">            {</div><div class="ln">                <span style="color:#0000FF;font-weight:bold">while</span> (<span style="color:#008B8B;font-weight:bold">true</span>)</div><div class="ln">                {</div><div class="ln">                    <span style="color:#FF0000;font-weight:bold">byte</span>[] lenBuf = <span style="color:#008B8B;font-weight:bold">new</span> <span style="color:#FF0000;font-weight:bold">byte</span>[<span style="color:#00008B">4</span>];</div><div class="ln">                    <span style="color:#0000FF;font-weight:bold">if</span> (<span style="color:#0000FF;font-weight:bold">await</span> <span style="color:#191970;font-weight:bold">ReadExact</span>(ns, lenBuf, <span style="color:#00008B">0</span>, <span style="color:#00008B">4</span>) == <span style="color:#00008B">0</span>)</div><div class="ln">                    <span class="bm">{</span></div><div class="ln">                        <span style="color:#000080">break</span>;</div><div class="ln">                    <span class="bm">}</span></div><div class="ln">                    <span style="color:#FF0000;font-weight:bold">int</span> num = <span style="color:#004085">BitConverter</span>.<span style="color:#191970;font-weight:bold">ToInt32</span>(lenBuf, <span style="color:#00008B">0</span>);</div><div class="ln">                    <span style="color:#0000FF;font-weight:bold">if</span> (num &lt;= <span style="color:#00008B">0</span> || num &gt; <span style="color:#00008B">1048576</span>)</div>
 </div>
</div>
<!-- folding margin -->
<div class="abs" style="left:694px;top:389px;width:2px;height:1034px;background:#C8C8C8"></div>
<div class="abs" style="left:695px;top:824px;width:18px;height:2px;background:#C8C8C8"></div>
<div class="fb" style="left:684px;top:270px"><div class="h"></div><div class="v"></div></div>
<div class="fb" style="left:684px;top:366px"><div class="h"></div></div>
<div class="fb" style="left:684px;top:558px"><div class="h"></div></div>
<div class="fb" style="left:684px;top:910px"><div class="h"></div></div>
</body></html>
